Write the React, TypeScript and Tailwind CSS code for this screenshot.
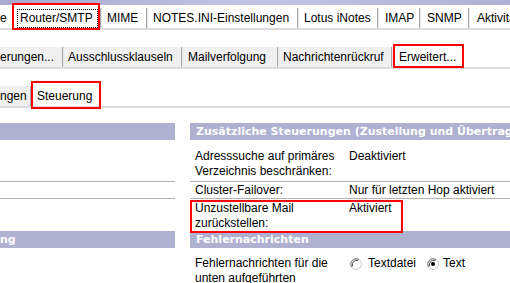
import React from "react";

const Sep = () => <div className="w-[2px] shrink-0 self-stretch bg-[#a8a8a8] border-r border-[#e8e8e8]" />;

function Radio({ checked }: { checked?: boolean }) {
  return (
    <svg width="12" height="12" viewBox="0 0 12 12" className="shrink-0">
      <circle cx="6" cy="6" r="5.5" fill="#fff" stroke="#c8c8c8" />
      <path d="M1.5 9 A5.5 5.5 0 0 1 9 1.5" fill="none" stroke="#808080" strokeWidth="1" />
      <path d="M2.5 8.2 A4.5 4.5 0 0 1 8.2 2.5" fill="none" stroke="#404040" strokeWidth="1" />
      {checked && <circle cx="6" cy="6" r="2" fill="#000" />}
    </svg>
  );
}

export default function App() {
  return (
    <div className="w-[510px] h-[283px] overflow-hidden bg-white text-black font-['Liberation_Sans',Arial,sans-serif] text-[12px] leading-[15px]">
      {/* banner */}
      <div className="h-[5px] bg-gradient-to-r from-[#a8a8d0] via-[#c4c4e2] to-[#b0b0d8]" />
      {/* row 1 tabs */}
      <div className="mt-[3px] flex h-[20px] leading-[20px] whitespace-nowrap">
        <div className="w-[12px] shrink-0 overflow-hidden">e</div>
        <div className="relative w-[88px] shrink-0 pl-[8px] bg-white">
          Router/SMTP
          <span className="absolute left-[5px] right-[2px] top-[1px] bottom-0 border border-dotted border-black" />
          <span className="absolute left-0 right-0 top-[-5px] bottom-[-2px] border-2 border-[#ff0000]" />
        </div>
        <Sep />
        <div className="w-[44px] shrink-0 pl-[5px]">MIME</div>
        <Sep />
        <div className="w-[149px] shrink-0 pl-[5px]">NOTES.INI-Einstellungen</div>
        <Sep />
        <div className="w-[78px] shrink-0 pl-[5px]">Lotus iNotes</div>
        <Sep />
        <div className="w-[40px] shrink-0 pl-[6px]">IMAP</div>
        <Sep />
        <div className="w-[47px] shrink-0 pl-[6px]">SNMP</div>
        <Sep />
        <div className="flex-1 min-w-0 pl-[7px] overflow-hidden">Aktivitäten</div>
      </div>
      <div className="h-[2px] bg-[#dcdcdc]" />

      {/* row 2 tabs */}
      <div className="mt-[17px] flex h-[20px] leading-[20px] whitespace-nowrap">
        <div className="w-[62px] shrink-0 bg-[#f0f0f0] overflow-hidden">erungen...</div>
        <Sep />
        <div className="w-[117px] shrink-0 pl-[4px] bg-[#f0f0f0]">Ausschlussklauseln</div>
        <Sep />
        <div className="w-[94px] shrink-0 pl-[5px] bg-[#f0f0f0]">Mailverfolgung</div>
        <Sep />
        <div className="w-[112px] shrink-0 pl-[4px] bg-[#f0f0f0]">Nachrichtenrückruf</div>
        <Sep />
        <div className="relative w-[71px] shrink-0 pl-[6px] bg-white">
          Erweitert...
          <span className="absolute left-0 right-0 top-[-3px] bottom-[-1px] border-2 border-[#ff0000]" />
        </div>
        <div className="flex-1" />
      </div>
      <div className="h-[2px] bg-[#dcdcdc]" />

      {/* row 3 tabs */}
      <div className="mt-[17px] flex h-[20px] leading-[20px] whitespace-nowrap">
        <div className="w-[30px] shrink-0 bg-[#f0f0f0] overflow-hidden">ngen</div>
        <Sep />
        <div className="relative w-[68px] shrink-0 pl-[5px] bg-white">
          Steuerung
          <span className="absolute left-[-1px] right-[-1px] top-[-5px] bottom-[-3px] border-2 border-[#ff0000]" />
        </div>
        <div className="flex-1" />
      </div>
      <div className="h-[2px] bg-[#dcdcdc]" />

      {/* content */}
      <div className="mt-[15px] flex gap-[15px]">
        {/* left column */}
        <div className="w-[175px] shrink-0 flex flex-col">
          <div className="h-[17px] bg-[#b0b0d0]" />
          <div className="h-[42px] border-b border-[#b4b4b4]" />
          <div className="h-[17px] border-b border-[#b4b4b4]" />
          <div className="h-[32px]" />
          <div className="h-[17px] bg-[#b0b0d0] text-white font-['DejaVu_Sans',sans-serif] font-bold text-[11px] leading-[17px] whitespace-nowrap overflow-hidden">
            ng
          </div>
        </div>
        {/* right column */}
        <div className="flex-1 min-w-0 flex flex-col">
          <div className="h-[17px] bg-[#b0b0d0] pl-[6px] text-white font-['DejaVu_Sans',sans-serif] font-bold text-[11px] leading-[17px] whitespace-nowrap overflow-hidden">
            Zusätzliche Steuerungen (Zustellung und Übertragung)
          </div>
          <div className="flex pt-[9px] pb-[2px] h-[42px] border-b border-[#b4b4b4]">
            <div className="w-[159px] shrink-0 pl-[5px]">
              Adresssuche auf primäres
              <br />
              Verzeichnis beschränken:
            </div>
            <div className="whitespace-nowrap">Deaktiviert</div>
          </div>
          <div className="flex pt-[1px] h-[17px] border-b border-[#b4b4b4]">
            <div className="w-[159px] shrink-0 pl-[5px]">Cluster-Failover:</div>
            <div className="whitespace-nowrap">Nur für letzten Hop aktiviert</div>
          </div>
          <div className="relative flex pt-[2px] h-[32px]">
            <div className="w-[159px] shrink-0 pl-[5px]">
              Unzustellbare Mail
              <br />
              zurückstellen:
            </div>
            <div className="whitespace-nowrap">Aktiviert</div>
            <span className="absolute left-0 top-[1px] w-[213px] h-[33px] border-2 border-[#ff0000]" />
          </div>
          <div className="h-[17px] bg-[#b0b0d0] pl-[6px] text-white font-['DejaVu_Sans',sans-serif] font-bold text-[11px] leading-[17px] whitespace-nowrap overflow-hidden">
            Fehlernachrichten
          </div>
          <div className="flex pt-[8px]">
            <div className="w-[159px] shrink-0 pl-[5px]">
              Fehlernachrichten für die
              <br />
              unten aufgeführten
            </div>
            <div className="flex items-start whitespace-nowrap">
              <div className="ml-[1px] mt-[2px]">
                <Radio />
              </div>
              <span className="ml-[6px]">Textdatei</span>
              <div className="ml-[11px] mt-[2px]">
                <Radio checked />
              </div>
              <span className="ml-[4px]">Text</span>
            </div>
          </div>
        </div>
      </div>
    </div>
  );
}
